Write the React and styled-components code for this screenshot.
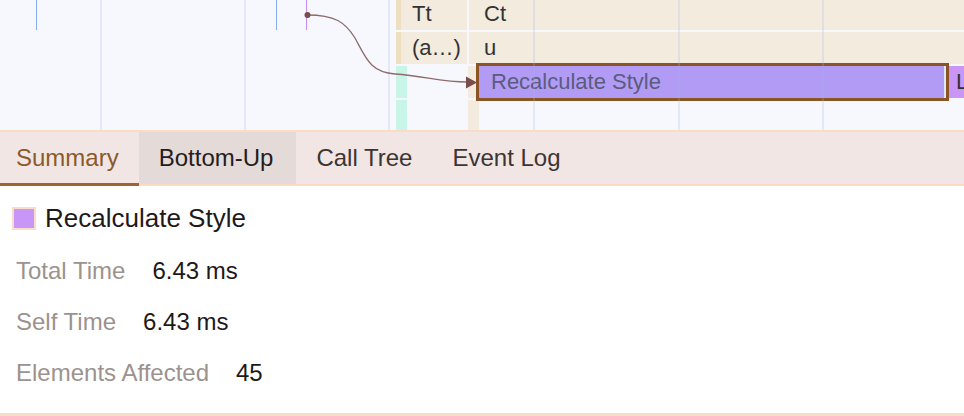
import styled, { createGlobalStyle } from 'styled-components';

const GlobalStyle = createGlobalStyle`
  html, body {
    margin: 0;
    padding: 0;
    background: #ffffff;
    font-family: "Liberation Sans", Arial, Helvetica, sans-serif;
  }
`;

const Page = styled.div`
  width: 964px;
  height: 416px;
  display: flex;
  flex-direction: column;
  overflow: hidden;
`;

// flame chart canvas: entries sit at their time/depth coordinates
const FlameChart = styled.div`
  position: relative;
  flex-shrink: 0;
  height: 130px;
  background: #f7f8fd;
  border-bottom: 2px solid #f8dcc8;
  overflow: hidden;
`;

const ROW_TOP = -2;
const ROW_PITCH = 34;

const Entry = styled.div`
  position: absolute;
  left: ${(p) => p.$x}px;
  top: ${(p) => ROW_TOP + p.$row * ROW_PITCH}px;
  width: ${(p) => p.$w}px;
  height: 32px;
  background: ${(p) => p.$bg};
  box-sizing: border-box;
  padding-left: ${(p) => (p.$pad != null ? p.$pad : 11)}px;
  display: flex;
  align-items: center;
  font-size: 22px;
  color: #333333;
  white-space: nowrap;
  overflow: hidden;
`;

const Selected = styled.div`
  position: absolute;
  left: 476px;
  top: 63px;
  width: 473px;
  height: 38px;
  box-sizing: border-box;
  border: 3px solid #8b5424;
  background: #b29bf5;
  box-shadow: inset -2px 0 0 #dfe6f7;
  padding-left: 12px;
  display: flex;
  align-items: center;
  font-size: 22px;
  color: #5a5c7e;
  white-space: nowrap;
`;

const Overlay = styled.svg`
  position: absolute;
  left: 0;
  top: 0;
  pointer-events: none;
`;

const TabBar = styled.div`
  flex-shrink: 0;
  display: flex;
  height: 54px;
  box-sizing: border-box;
  background: #f1e6e3;
  border-bottom: 2px solid #f8dcc8;
`;

const Tab = styled.div`
  position: relative;
  display: flex;
  align-items: center;
  padding: 0 ${(p) => (p.$hover ? 23 : 20)}px 0 ${(p) => (p.$first ? 16 : 20)}px;
  font-size: 24px;
  color: ${(p) => (p.$active ? '#8b5a2b' : p.$hover ? '#241d1b' : '#3d3533')};
  background: ${(p) => (p.$hover ? '#e4dbd9' : 'transparent')};

  &::after {
    content: '';
    display: ${(p) => (p.$active ? 'block' : 'none')};
    position: absolute;
    left: 0;
    right: 0;
    bottom: -2px;
    height: 3px;
    background: #a0652f;
  }
`;

const Summary = styled.div`
  flex: 1;
  box-sizing: border-box;
  padding: 16px 12px 0;
  border-bottom: 3px solid #f8dcc8;
`;

const Title = styled.div`
  display: flex;
  align-items: center;
  gap: 9px;
  height: 32px;
  font-size: 26px;
  color: #1f1a19;
`;

const Swatch = styled.span`
  width: 24px;
  height: 23px;
  box-sizing: border-box;
  border: 2px solid #f9dccb;
  background: ${(p) => p.$color};
`;

const Rows = styled.div`
  padding: 11px 0 0 4px;
`;

const Row = styled.div`
  display: flex;
  align-items: center;
  gap: 27px;
  height: 51px;
  font-size: 24px;
`;

const Label = styled.span`
  color: #9c928e;
`;

const Value = styled.span`
  color: #1d1918;
`;

const TAN = '#f2ebde';
const entries = [
  { row: 0, x: 396, w: 5, bg: '#eedfc0' },
  { row: 0, x: 401, w: 66, bg: TAN, label: 'Tt' },
  { row: 0, x: 469, w: 2, bg: TAN },
  { row: 0, x: 473, w: 491, bg: TAN, label: 'Ct' },
  { row: 1, x: 396, w: 5, bg: '#eedfc0' },
  { row: 1, x: 401, w: 66, bg: TAN, label: '(a…)' },
  { row: 1, x: 469, w: 2, bg: TAN },
  { row: 1, x: 473, w: 491, bg: TAN, label: 'u' },
  { row: 2, x: 396, w: 5, bg: '#c8f5e8' },
  { row: 2, x: 468, w: 5, bg: TAN },
  { row: 2, x: 949, w: 15, bg: '#c996f5', label: 'L', pad: 7 },
  { row: 3, x: 396, w: 5, bg: '#c8f5e8' },
  { row: 3, x: 468, w: 5, bg: TAN },
];

const gridLines = [101, 245, 389, 534, 679, 823];

const stats = [
  ['Total Time', '6.43 ms'],
  ['Self Time', '6.43 ms'],
  ['Elements Affected', '45'],
];

const tabs = ['Summary', 'Bottom-Up', 'Call Tree', 'Event Log'];

export default function App() {
  return (
    <Page>
      <GlobalStyle />
      <FlameChart>
        {entries.map((e, i) => (
          <Entry key={i} $row={e.row} $x={e.x} $w={e.w} $bg={e.bg} $pad={e.pad}>
            {e.label}
          </Entry>
        ))}
        <Selected>Recalculate Style</Selected>
        <Overlay width="964" height="130" viewBox="0 0 964 130">
          {gridLines.map((x) => (
            <line key={x} x1={x} y1="0" x2={x} y2="130" stroke="rgba(160,185,230,0.32)" strokeWidth="1.5" />
          ))}
          <line x1="36.5" y1="0" x2="36.5" y2="30" stroke="#86acf5" strokeWidth="1" />
          <line x1="276.5" y1="0" x2="276.5" y2="30" stroke="#86acf5" strokeWidth="1" />
          <line x1="306.5" y1="0" x2="306.5" y2="30" stroke="#c68cf5" strokeWidth="1" />
          <path
            d="M307 15 C335 15 345 22 355 38 C366 58 370 72 395 74 C425 76 440 82 468 82"
            fill="none"
            stroke="#8d6b6b"
            strokeWidth="1.3"
          />
          <circle cx="307.5" cy="15" r="3" fill="#7a4c4c" />
          <polygon points="466,76.5 477,82.5 466,88.5" fill="#7a4c4c" />
        </Overlay>
      </FlameChart>

      <TabBar>
        {tabs.map((t, i) => (
          <Tab key={t} $first={i === 0} $active={i === 0} $hover={i === 1}>
            {t}
          </Tab>
        ))}
      </TabBar>

      <Summary>
        <Title>
          <Swatch $color="#c896f7" />
          Recalculate Style
        </Title>
        <Rows>
          {stats.map(([label, value]) => (
            <Row key={label}>
              <Label>{label}</Label>
              <Value>{value}</Value>
            </Row>
          ))}
        </Rows>
      </Summary>
    </Page>
  );
}
